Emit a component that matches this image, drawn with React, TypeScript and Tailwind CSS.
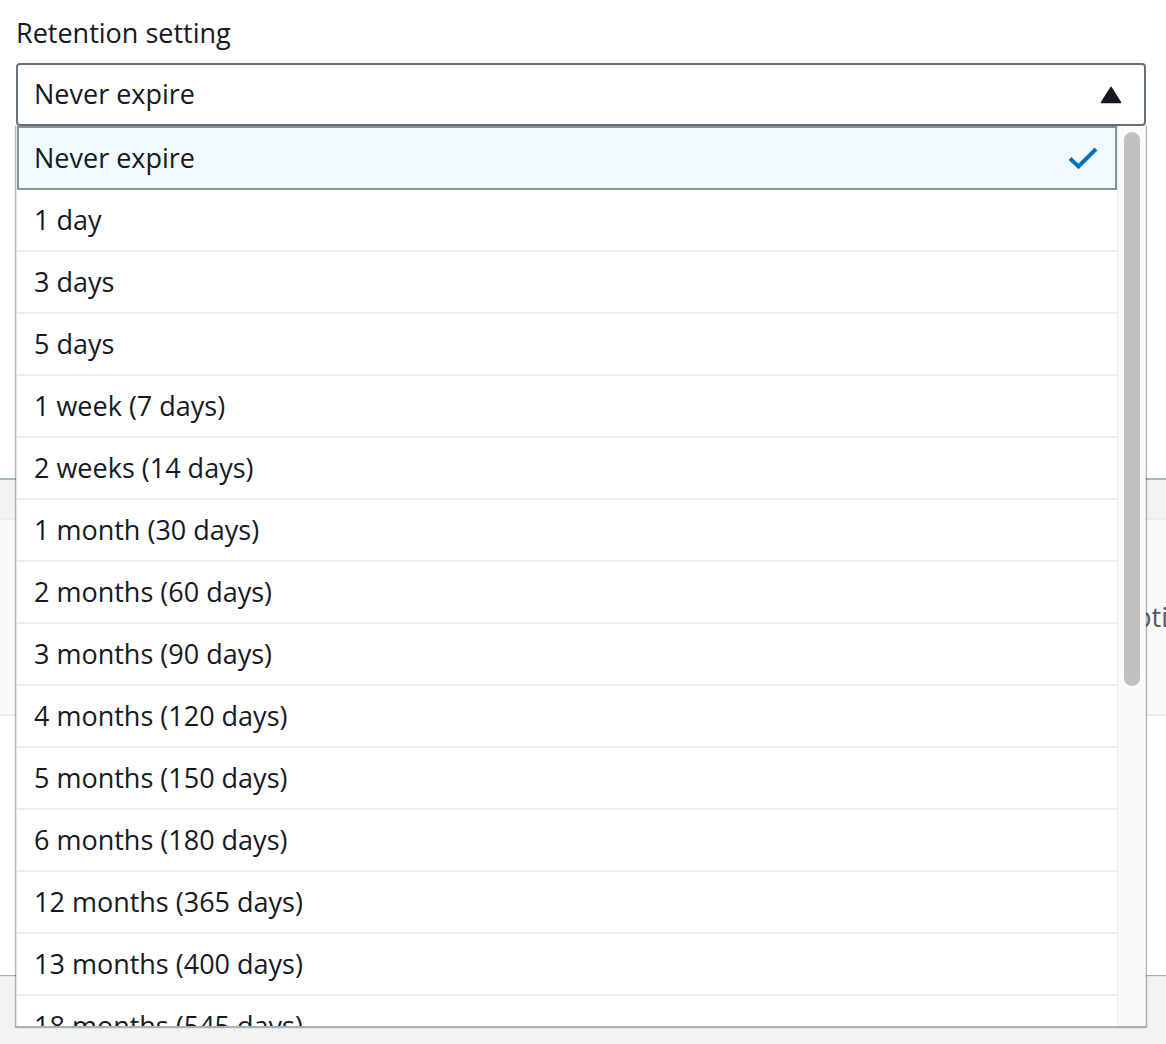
import React from 'react';

const OPTIONS = [
  'Never expire',
  '1 day',
  '3 days',
  '5 days',
  '1 week (7 days)',
  '2 weeks (14 days)',
  '1 month (30 days)',
  '2 months (60 days)',
  '3 months (90 days)',
  '4 months (120 days)',
  '5 months (150 days)',
  '6 months (180 days)',
  '12 months (365 days)',
  '13 months (400 days)',
  '18 months (545 days)',
  '2 years (731 days)',
  '5 years (1827 days)',
  '10 years (3653 days)',
];

function CheckIcon() {
  return (
    <svg width="32" height="24" viewBox="0 0 32 24" fill="none">
      <path d="M3 12.5 L11.5 20.5 L29 3" stroke="#0073bb" strokeWidth="4" strokeLinejoin="miter" />
    </svg>
  );
}

function CaretUp() {
  return (
    <svg width="22" height="18" viewBox="0 0 22 18">
      <path d="M11 1.5 L20.5 16.5 L1.5 16.5 Z" fill="#16191f" stroke="#16191f" strokeWidth="1.5" strokeLinejoin="round" />
    </svg>
  );
}

function Dropdown() {
  const selected = OPTIONS[0];
  return (
    <div className="absolute left-0 right-0 top-full z-10 flex h-[900px] overflow-hidden border-l border-[#e3e6e6] bg-white shadow-[0_1px_1px_1px_rgba(0,28,36,0.3)]">
      <ul className="flex-1 overflow-hidden border-r border-[#eaeded]">
        {OPTIONS.map((opt) =>
          opt === selected ? (
            <li
              key={opt}
              className="flex h-[64px] items-center justify-between border-2 border-[#879596] bg-[#f1faff] pl-[15px] pr-[16px]"
            >
              <span>{opt}</span>
              <CheckIcon />
            </li>
          ) : (
            <li key={opt} className="flex h-[62px] items-center border-b-2 border-[#eaeded] pl-[17px]">
              {opt}
            </li>
          ),
        )}
      </ul>
      {/* scrollbar */}
      <div className="w-[28px] shrink-0 border-r border-[#e6e6e6] bg-[#fafafa] pt-[6px] pl-[6px]">
        <div className="h-[554px] w-[16px] rounded-full bg-[#c1c1c1]" />
      </div>
    </div>
  );
}

export default function App() {
  return (
    <div className="min-h-[1044px] bg-[#f2f3f3] text-[27px] text-[#16191f] [font-family:'Open_Sans',sans-serif]">
      <div className="bg-white pl-4 pr-5 pt-[13px]">
        <div className="leading-[40px]">Retention setting</div>
        <div className="relative mt-[10px]">
          <div className="flex h-[63px] items-center justify-between rounded-[4px] border-2 border-[#687078] bg-white pl-[16px] pr-[22px]">
            <span>Never expire</span>
            <CaretUp />
          </div>
          <Dropdown />
        </div>
        <div className="h-[352px]" />
      </div>

      <div className="border-t-2 border-[#aab7b8] bg-white shadow-[0_1px_1px_0_rgba(0,28,36,0.3)]">
        <div className="h-[40px] border-b-2 border-[#eaeded] bg-[#f2f3f3]" />
        <div className="flex h-[196px] items-center border-b-2 border-[#eaeded] bg-[#fafafa]">
          <div className="w-[1114px] shrink-0" />
          <span className="whitespace-nowrap text-[#545b64]">Options</span>
        </div>
        <div className="h-[259px]" />
      </div>
    </div>
  );
}
